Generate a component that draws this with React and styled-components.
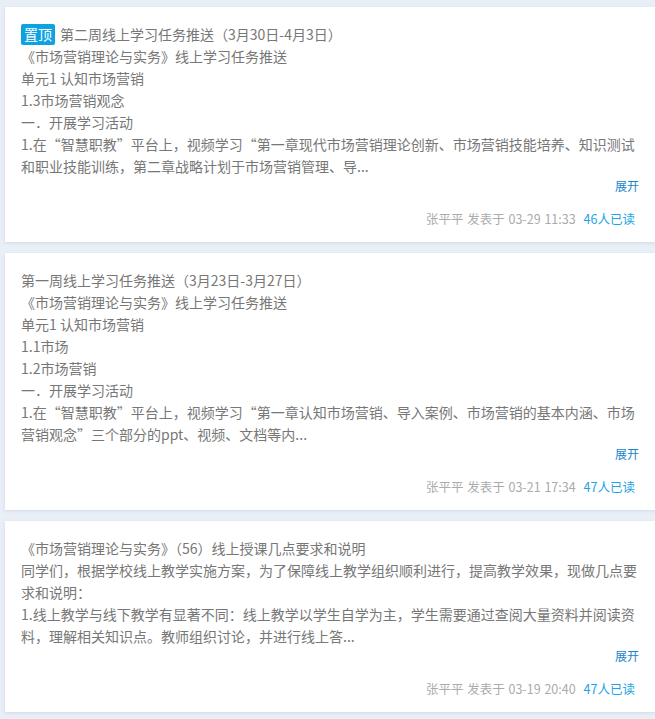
import React from "react";
import styled, { createGlobalStyle } from "styled-components";

const GlobalStyle = createGlobalStyle`
  html, body {
    margin: 0;
    padding: 0;
    background: #e9eff7;
  }
  body {
    font-family: "Noto Sans CJK SC", "Noto Sans", sans-serif;
    overflow: hidden;
  }
`;

const Page = styled.div`
  display: flex;
  flex-direction: column;
  gap: 11px;
  padding: 7px 0 7px 5px;
  background: #e9eff7;
  min-height: 719px;
  box-sizing: border-box;
`;

const Card = styled.article`
  background: #ffffff;
  padding: 16px 16px 13px 16px;
  box-shadow: 0 1px 3px rgba(160, 175, 195, 0.35);
  display: flex;
  flex-direction: column;
`;

const Body = styled.div`
  font-size: 14px;
  line-height: 22px;
  color: #777777;
`;

const Line = styled.div`
  display: flex;
  align-items: center;
  gap: 5px;
`;

const Para = styled.p`
  margin: 0;
`;

const Badge = styled.span`
  display: inline-flex;
  align-items: center;
  justify-content: center;
  width: 34px;
  height: 21px;
  border-radius: 2px;
  background: #0ea2e2;
  color: #ffffff;
  font-size: 14px;
  line-height: 21px;
`;

const ExpandRow = styled.div`
  display: flex;
  justify-content: flex-end;
  font-size: 12px;
  line-height: 18px;
`;

const Expand = styled.a`
  color: #1a86cc;
  cursor: pointer;
`;

const Footer = styled.div`
  display: flex;
  justify-content: flex-end;
  align-items: center;
  gap: 8px;
  margin-top: 14px;
  padding-right: 4px;
  font-size: 12.5px;
  line-height: 20px;
`;

const Meta = styled.span`
  color: #ababab;
  word-spacing: 1px;
`;

const Reads = styled.span`
  color: #1ea4e4;
`;

const posts = [
  {
    pinned: true,
    title: "第二周线上学习任务推送（3月30日-4月3日）",
    lines: [
      "《市场营销理论与实务》线上学习任务推送",
      "单元1 认知市场营销",
      "1.3市场营销观念",
      "一．开展学习活动",
      "1.在“智慧职教”平台上，视频学习“第一章现代市场营销理论创新、市场营销技能培养、知识测试和职业技能训练，第二章战略计划于市场营销管理、导...",
    ],
    meta: "张平平 发表于 03-29 11:33",
    reads: "46人已读",
  },
  {
    pinned: false,
    title: "第一周线上学习任务推送（3月23日-3月27日）",
    lines: [
      "《市场营销理论与实务》线上学习任务推送",
      "单元1 认知市场营销",
      "1.1市场",
      "1.2市场营销",
      "一．开展学习活动",
      "1.在“智慧职教”平台上，视频学习“第一章认知市场营销、导入案例、市场营销的基本内涵、市场营销观念”三个部分的ppt、视频、文档等内...",
    ],
    meta: "张平平 发表于 03-21 17:34",
    reads: "47人已读",
  },
  {
    pinned: false,
    title: "《市场营销理论与实务》（56）线上授课几点要求和说明",
    lines: [
      "同学们，根据学校线上教学实施方案，为了保障线上教学组织顺利进行，提高教学效果，现做几点要求和说明：",
      "1.线上教学与线下教学有显著不同：线上教学以学生自学为主，学生需要通过查阅大量资料并阅读资料，理解相关知识点。教师组织讨论，并进行线上答...",
    ],
    meta: "张平平 发表于 03-19 20:40",
    reads: "47人已读",
  },
];

function Post({ post }) {
  return (
    <Card>
      <Body>
        <Line>
          {post.pinned && <Badge>置顶</Badge>}
          <span>{post.title}</span>
        </Line>
        {post.lines.map((l, i) => (
          <Para key={i}>{l}</Para>
        ))}
      </Body>
      <ExpandRow>
        <Expand>展开</Expand>
      </ExpandRow>
      <Footer>
        <Meta>{post.meta}</Meta>
        <Reads>{post.reads}</Reads>
      </Footer>
    </Card>
  );
}

export default function App() {
  return (
    <>
      <GlobalStyle />
      <Page>
        {posts.map((p, i) => (
          <Post key={i} post={p} />
        ))}
      </Page>
    </>
  );
}
